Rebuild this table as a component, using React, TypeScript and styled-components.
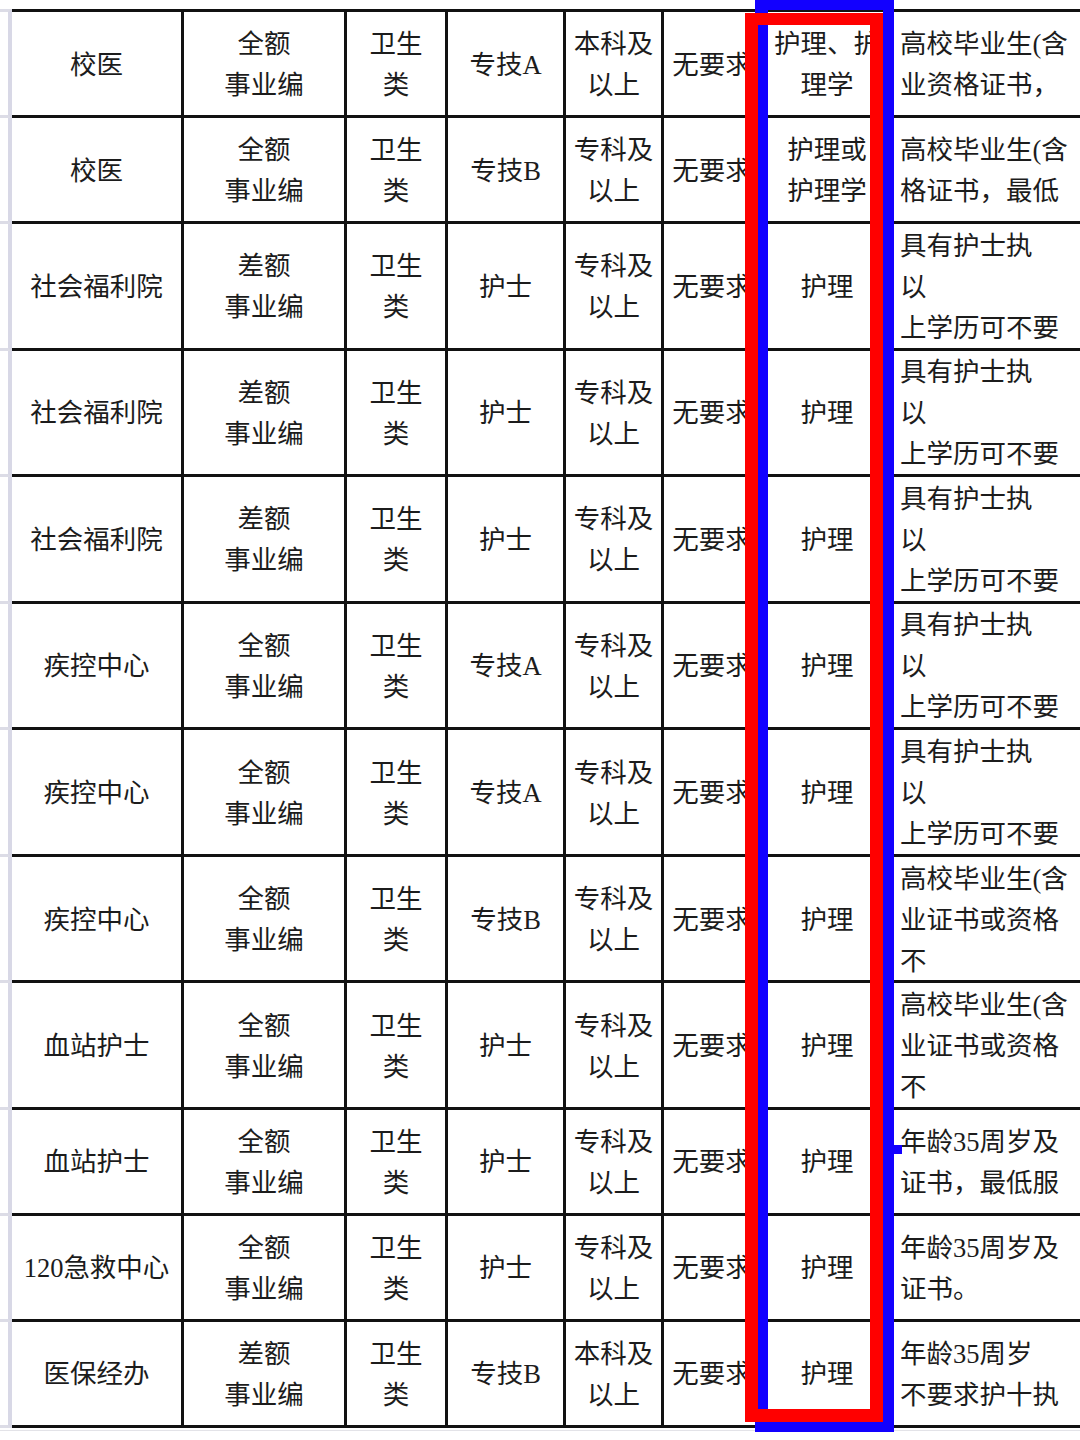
import React from "react";
import styled, { createGlobalStyle } from "styled-components";

const GlobalStyle = createGlobalStyle`
  html, body {
    margin: 0;
    padding: 0;
    background: #ffffff;
  }
  body {
    font-family: "Liberation Serif", "Noto Sans CJK SC", serif;
  }
`;

const Page = styled.div`
  position: relative;
  width: 1080px;
  height: 1440px;
  overflow: hidden;
  background: #ffffff;
  padding-top: 9px;
  box-sizing: border-box;
`;

const Sheet = styled.div`
  display: flex;
  flex-direction: column;
`;

const Row = styled.div<{ $h: number }>`
  display: flex;
  flex: none;
  height: ${(p) => p.$h}px;
`;

const Gutter = styled.div<{ $first?: boolean }>`
  width: 12px;
  flex: none;
  box-sizing: border-box;
  border-right: 4px solid #d8d8e6;
  border-bottom: 3px solid #dcdce6;
  border-top: ${(p) => (p.$first ? "3px solid #dcdce6" : "none")};
`;

const Cell = styled.div<{ $w: number; $first?: boolean; $left?: boolean }>`
  width: ${(p) => p.$w}px;
  flex: none;
  box-sizing: border-box;
  border-right: 3px solid #111111;
  border-bottom: 3px solid #111111;
  border-top: ${(p) => (p.$first ? "3px solid #111111" : "none")};
  display: flex;
  flex-direction: column;
  justify-content: center;
  align-items: ${(p) => (p.$left ? "flex-start" : "center")};
  padding-left: ${(p) => (p.$left ? "6px" : "0")};
  padding-top: 3px;
  font-size: 26.5px;
  line-height: 41px;
  color: #1c1c1c;
  white-space: nowrap;
`;

const Line = styled.span`
  display: block;
`;

const Rule = styled.div`
  margin-top: 2px;
  height: 1px;
  background: #e3e3e8;
`;

const BlueFrame = styled.div`
  position: absolute;
  left: 755px;
  top: -3px;
  width: 139px;
  height: 1435px;
  box-sizing: border-box;
  border-style: solid;
  border-color: #1200ff;
  border-width: 13px 11px 10px 13px;
  pointer-events: none;
`;

const RedFrame = styled.div`
  position: absolute;
  left: 745px;
  top: 13px;
  width: 138px;
  height: 1409px;
  box-sizing: border-box;
  border-style: solid;
  border-color: #ff0000;
  border-width: 12px 13px 13px 13px;
  pointer-events: none;
`;

const BlueNotch = styled.div`
  position: absolute;
  left: 893px;
  top: 1145px;
  width: 9px;
  height: 9px;
  background: #1200ff;
`;

const widths = [172, 163, 101, 118, 98, 99, 131, 300];

type RowData = { h: number; cells: string[][] };

const nurse3 = ["具有护士执", "以", "上学历可不要"];
const grad3 = ["高校毕业生(含", "业证书或资格", "不"];
const full = ["全额", "事业编"];
const diff = ["差额", "事业编"];
const wei = ["卫生", "类"];
const zk = ["专科及", "以上"];
const bk = ["本科及", "以上"];
const R3 = 126.57;

const rows: RowData[] = [
  { h: 109, cells: [["校医"], full, wei, ["专技A"], bk, ["无要求"], ["护理、护", "理学"], ["高校毕业生(含", "业资格证书，"]] },
  { h: 106, cells: [["校医"], full, wei, ["专技B"], zk, ["无要求"], ["护理或", "护理学"], ["高校毕业生(含", "格证书，最低"]] },
  { h: R3, cells: [["社会福利院"], diff, wei, ["护士"], zk, ["无要求"], ["护理"], nurse3] },
  { h: R3, cells: [["社会福利院"], diff, wei, ["护士"], zk, ["无要求"], ["护理"], nurse3] },
  { h: R3, cells: [["社会福利院"], diff, wei, ["护士"], zk, ["无要求"], ["护理"], nurse3] },
  { h: R3, cells: [["疾控中心"], full, wei, ["专技A"], zk, ["无要求"], ["护理"], nurse3] },
  { h: R3, cells: [["疾控中心"], full, wei, ["专技A"], zk, ["无要求"], ["护理"], nurse3] },
  { h: R3, cells: [["疾控中心"], full, wei, ["专技B"], zk, ["无要求"], ["护理"], grad3] },
  { h: R3, cells: [["血站护士"], full, wei, ["护士"], zk, ["无要求"], ["护理"], grad3] },
  { h: 106, cells: [["血站护士"], full, wei, ["护士"], zk, ["无要求"], ["护理"], ["年龄35周岁及", "证书，最低服"]] },
  { h: 106, cells: [["120急救中心"], full, wei, ["护士"], zk, ["无要求"], ["护理"], ["年龄35周岁及", "证书。"]] },
  { h: 106, cells: [["医保经办"], diff, wei, ["专技B"], bk, ["无要求"], ["护理"], ["年龄35周岁", "不要求护十执"]] },
];

export default function App() {
  return (
    <>
      <GlobalStyle />
      <Page>
        <Sheet>
          {rows.map((r, ri) => (
            <Row key={ri} $h={r.h}>
              <Gutter $first={ri === 0} />
              {r.cells.map((lines, ci) => (
                <Cell key={ci} $w={widths[ci]} $first={ri === 0} $left={ci === 7}>
                  {lines.map((t, li) => (
                    <Line key={li}>{t}</Line>
                  ))}
                </Cell>
              ))}
            </Row>
          ))}
          <Rule />
        </Sheet>
        <BlueFrame />
        <RedFrame />
        <BlueNotch />
      </Page>
    </>
  );
}
